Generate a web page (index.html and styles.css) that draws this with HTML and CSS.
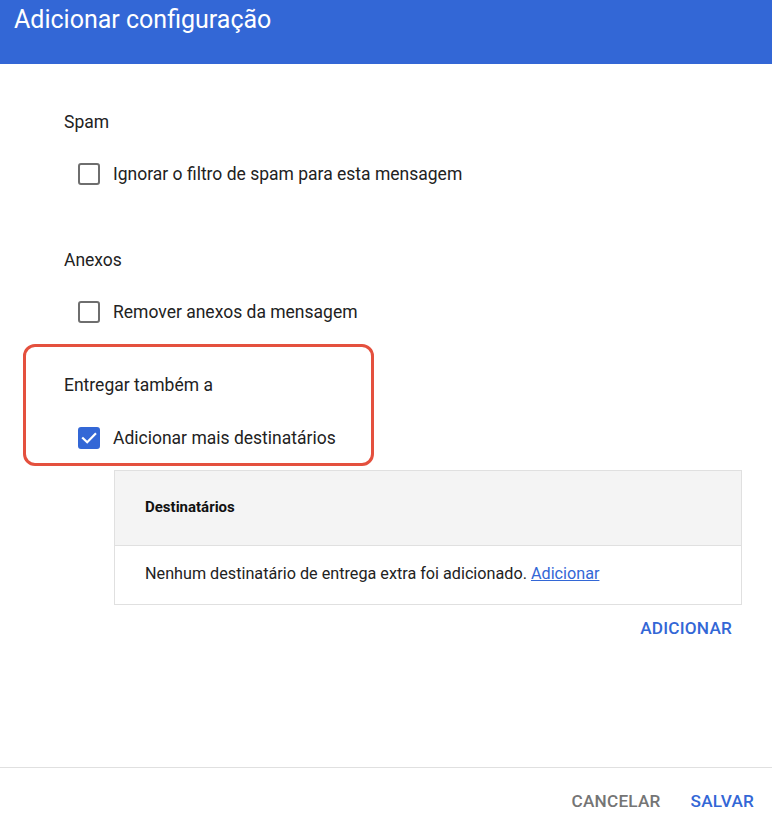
FILE: index.html
```html
<!DOCTYPE html>
<html lang="pt">
<head>
<meta charset="utf-8">
<title>Adicionar configuração</title>
<link rel="stylesheet" href="styles.css">
</head>
<body>
<div class="dialog">
  <header class="hdr">
    <h1 class="title">Adicionar configuração</h1>
  </header>
  <main class="content">
    <section class="setting">
      <div class="setting-label">Spam</div>
      <div class="option">
        <span class="box"></span>
        <span class="option-text">Ignorar o filtro de spam para esta mensagem</span>
      </div>
    </section>
    <section class="setting setting-gap">
      <div class="setting-label">Anexos</div>
      <div class="option">
        <span class="box"></span>
        <span class="option-text">Remover anexos da mensagem</span>
      </div>
    </section>
    <section class="setting highlight">
      <div class="setting-label">Entregar também a</div>
      <div class="option option-tight">
        <span class="box checked">
          <svg viewBox="0 0 22 22" width="22" height="22"><path d="M5 11.2 L9.2 15.2 L17.2 7" fill="none" stroke="#fff" stroke-width="2.2" stroke-linecap="square"/></svg>
        </span>
        <span class="option-text">Adicionar mais destinatários</span>
      </div>
    </section>
    <div class="table">
      <div class="table-head">Destinatários</div>
      <div class="table-body">Nenhum destinatário de entrega extra foi adicionado. <a class="link" href="#">Adicionar</a></div>
    </div>
    <div class="add-row">
      <span class="btn btn-primary">ADICIONAR</span>
    </div>
  </main>
  <footer class="footer">
    <span class="btn btn-muted">CANCELAR</span>
    <span class="btn btn-primary">SALVAR</span>
  </footer>
</div>
</body>
</html>
```

FILE: styles.css
```css
html, body {
  margin: 0;
  padding: 0;
  background: #fff;
}
body {
  font-family: Roboto, "Liberation Sans", sans-serif;
  color: #222;
}
.dialog {
  width: 772px;
  height: 826px;
  display: flex;
  flex-direction: column;
  overflow: hidden;
}
.hdr {
  height: 64px;
  background: #3367d6;
  flex: none;
}
.title {
  margin: 0;
  padding: 4px 0 0 14px;
  font-size: 25px;
  line-height: 32px;
  font-weight: 400;
  color: #fff;
}
.content {
  flex: 1;
  padding-top: 48px;
}
.setting {
  padding-left: 64px;
}
.setting-gap {
  margin-top: 64px;
}
.setting-label {
  font-size: 17.5px;
  line-height: 20px;
  height: 20px;
}
.option {
  margin-top: 30px;
  margin-left: 14px;
  height: 24px;
  display: flex;
  align-items: center;
  gap: 13px;
}
.option-tight {
  margin-top: 31px;
}
.option-text {
  font-size: 17.5px;
  line-height: 20px;
}
.box {
  width: 22px;
  height: 22px;
  box-sizing: border-box;
  border: 2px solid #6e6e6e;
  border-radius: 3px;
  flex: none;
  display: flex;
  align-items: center;
  justify-content: center;
}
.box.checked {
  background: #3367d6;
  border-color: #3367d6;
}
.box.checked svg {
  display: block;
  flex: none;
}
.highlight {
  margin: 20px 0 0 23px;
  width: 351px;
  box-sizing: border-box;
  border: 3px solid #e4503e;
  border-radius: 12px;
  padding: 28px 0 13px 38px;
}
.table {
  margin: 4px 30px 0 114px;
  border: 1px solid #e0e0e0;
}
.table-head {
  height: 75px;
  box-sizing: border-box;
  padding-bottom: 3px;
  background: #f4f4f4;
  border-bottom: 1px solid #e0e0e0;
  display: flex;
  align-items: center;
  padding-left: 30px;
  font-size: 15px;
  font-weight: 700;
  color: #111;
}
.table-body {
  height: 58px;
  box-sizing: border-box;
  padding-bottom: 3px;
  display: flex;
  align-items: center;
  padding-left: 30px;
  font-size: 16.2px;
  color: #222;
  white-space: pre;
}
.link {
  color: #3367d6;
  text-decoration: underline;
}
.add-row {
  display: flex;
  justify-content: flex-end;
  padding-right: 40px;
  margin-top: 13px;
}
.btn {
  font-size: 17.2px;
  line-height: 20px;
  font-weight: 500;
  letter-spacing: 0.2px;
}
.btn-primary {
  color: #3367d6;
}
.btn-muted {
  color: #757575;
}
.footer {
  flex: none;
  display: flex;
  justify-content: flex-end;
  align-items: flex-start;
  gap: 30px;
  padding: 23px 18px 0 0;
  box-sizing: border-box;
  height: 59px;
  border-top: 1px solid #e0e0e0;
}
```
